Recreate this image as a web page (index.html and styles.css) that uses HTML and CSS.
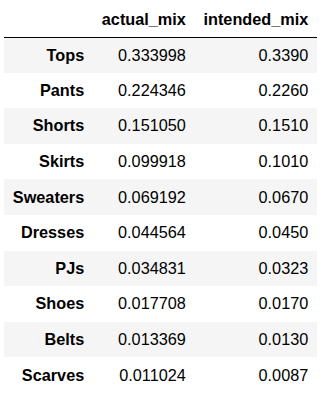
FILE: index.html
```html
<!DOCTYPE html>
<html>
<head>
<meta charset="utf-8">
<link rel="stylesheet" href="styles.css">
</head>
<body>
<table class="df">
  <thead>
    <tr><th class="blank"></th><th>actual_mix</th><th>intended_mix</th></tr>
  </thead>
  <tbody>
    <tr><th>Tops</th><td>0.333998</td><td>0.3390</td></tr>
    <tr><th>Pants</th><td>0.224346</td><td>0.2260</td></tr>
    <tr><th>Shorts</th><td>0.151050</td><td>0.1510</td></tr>
    <tr><th>Skirts</th><td>0.099918</td><td>0.1010</td></tr>
    <tr><th>Sweaters</th><td>0.069192</td><td>0.0670</td></tr>
    <tr><th>Dresses</th><td>0.044564</td><td>0.0450</td></tr>
    <tr><th>PJs</th><td>0.034831</td><td>0.0323</td></tr>
    <tr><th>Shoes</th><td>0.017708</td><td>0.0170</td></tr>
    <tr><th>Belts</th><td>0.013369</td><td>0.0130</td></tr>
    <tr><th>Scarves</th><td>0.011024</td><td>0.0087</td></tr>
  </tbody>
</table>
</body>
</html>
```
FILE: styles.css
```css
html, body {
  margin: 0;
  padding: 0;
  background: #ffffff;
}
body {
  padding: 0 4px;
  font-family: "Liberation Sans", Arial, sans-serif;
  font-size: 16.25px;
  color: #000000;
}
.df {
  border-collapse: collapse;
  border-spacing: 0;
  width: 313px;
}
.df th, .df td {
  padding: 0 8.75px;
  text-align: right;
  vertical-align: middle;
  white-space: nowrap;
  line-height: 19px;
}
.df thead th {
  height: 37px;
  font-weight: bold;
  border-bottom: 1px solid #000000;
  padding-top: 2px;
  box-sizing: border-box;
}
.df tbody tr {
  height: 35.6px;
}
.df tbody th {
  font-weight: bold;
}
.df tbody td {
  font-weight: normal;
}
.df tbody tr:nth-child(odd) {
  background: #f5f5f5;
}
```
